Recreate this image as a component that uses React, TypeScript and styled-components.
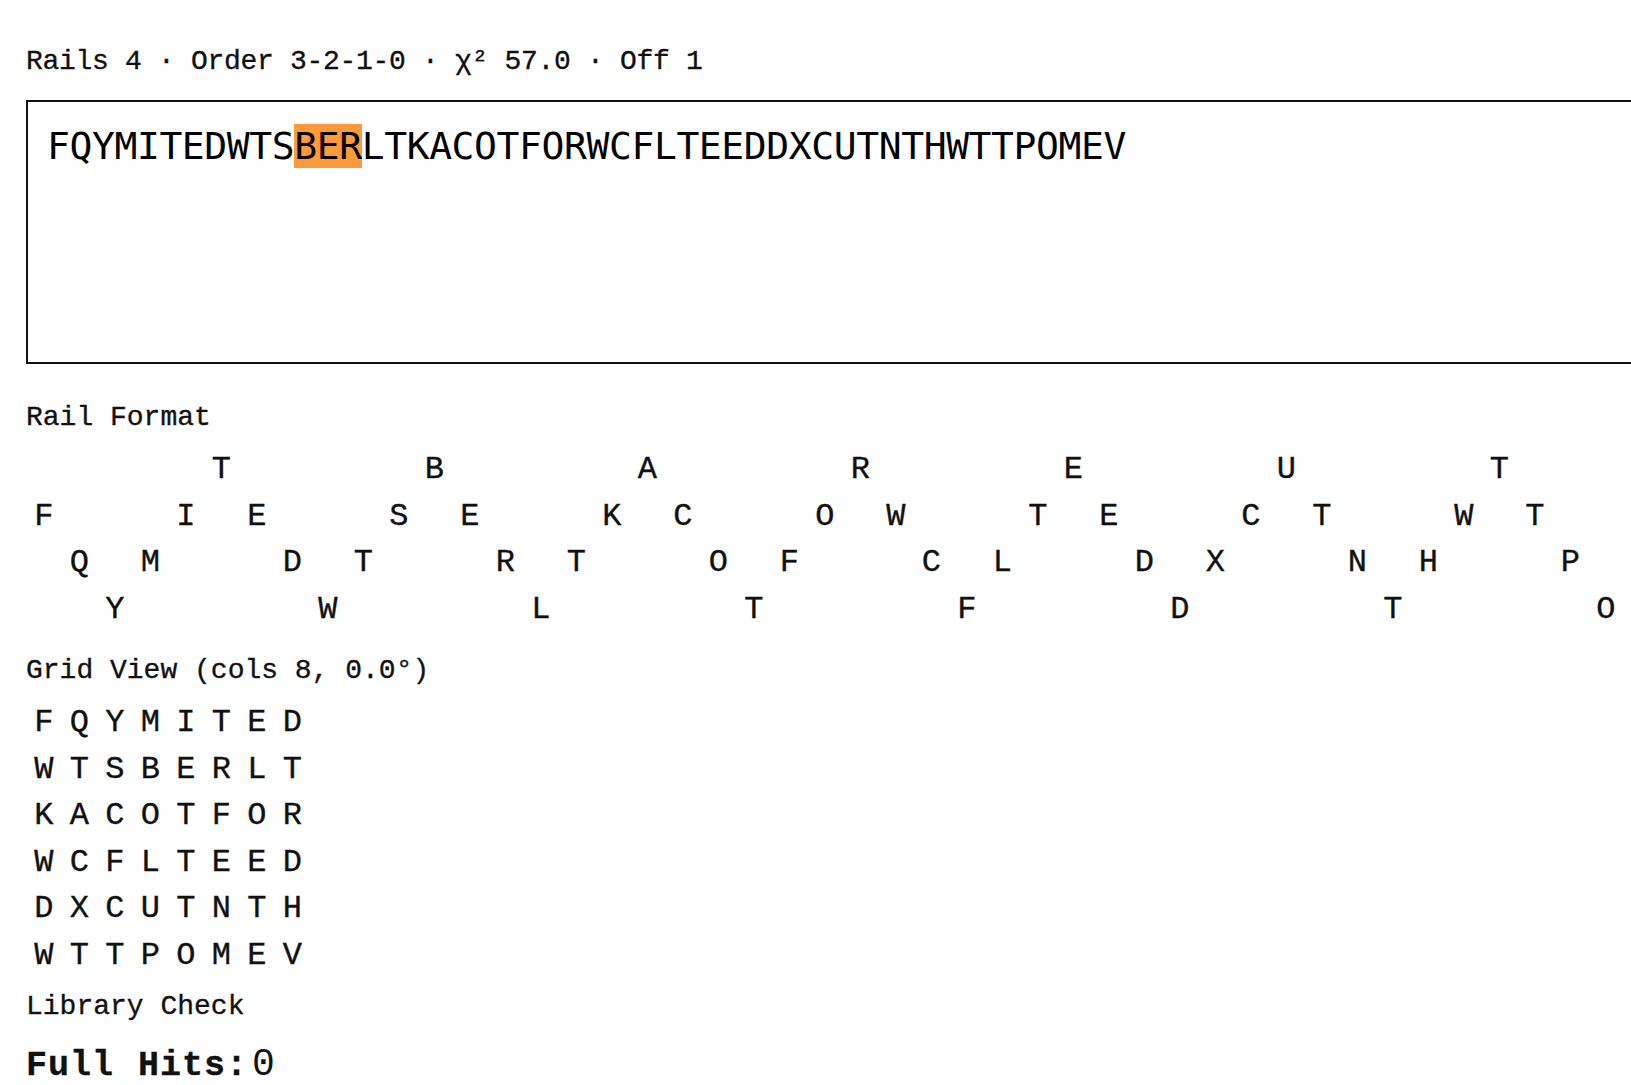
import React from "react";
import styled, { createGlobalStyle } from "styled-components";

const CIPHER = "FQYMITEDWTSBERLTKACOTFORWCFLTEEDDXCUTNTHWTTPOMEV";
const RAILS = 4;
const OFFSET = 1;
const COLS = 8;
const HL_START = 11;
const HL_LEN = 3;
const CELL = 35.5;

const railOf = (i: number) => {
  const period = 2 * (RAILS - 1);
  const p = (i + OFFSET) % period;
  return p < RAILS ? p : period - p;
};

const GlobalStyle = createGlobalStyle`
  html, body {
    margin: 0;
    padding: 0;
    background: #ffffff;
    overflow: hidden;
  }
  body {
    font-family: "Liberation Mono", "Courier New", monospace;
    color: #111111;
  }
`;

const Page = styled.main`
  width: max-content;
  padding: 46px 26px 40px 26px;
  display: flex;
  flex-direction: column;
`;

const typewriter = `
  font-family: "Liberation Mono", "Courier New", monospace;
  -webkit-text-stroke: 0.35px #111111;
  color: #111111;
`;

const StatusLine = styled.div`
  ${typewriter}
  font-size: 28px;
  line-height: 32px;
  letter-spacing: -0.3px;
  white-space: pre;
  margin-bottom: 22px;
`;

const CipherBox = styled.div`
  box-sizing: border-box;
  height: 264px;
  border: 2px solid #111111;
  padding: 22px 18px 22px 19px;
  font-family: "DejaVu Sans Mono", monospace;
  font-size: 38px;
  letter-spacing: -0.4px;
  color: #000000;
  white-space: pre;
`;

const Highlight = styled.mark`
  background: #ff9a3a;
  color: #000000;
`;

const SectionLabel = styled.h2<{ $gap: number }>`
  ${typewriter}
  margin: ${(p) => p.$gap}px 0 0 0;
  font-size: 28px;
  font-weight: 400;
  line-height: 32px;
  white-space: pre;
`;

const LetterBlock = styled.div<{ $gap: number; $cols: number }>`
  margin-top: ${(p) => p.$gap}px;
  display: grid;
  grid-template-columns: repeat(${(p) => p.$cols}, ${CELL}px);
  grid-auto-rows: 46.55px;
`;

const Cell = styled.span`
  ${typewriter}
  font-size: 32px;
  line-height: 46.55px;
  text-align: center;
`;

const HitsLine = styled.div`
  ${typewriter}
  margin-top: 18px;
  font-size: 35px;
  line-height: 48px;
  font-weight: 700;
  letter-spacing: 1px;
  word-spacing: 2px;
  white-space: pre;
`;

const HitsValue = styled.span`
  font-size: 38px;
  font-weight: 400;
  -webkit-text-stroke: 0;
  margin-left: 4px;
`;

export default function App() {
  const letters = CIPHER.split("");
  const railCells: React.ReactNode[] = [];
  for (let r = 0; r < RAILS; r++) {
    letters.forEach((ch, i) => {
      railCells.push(<Cell key={`r${r}-${i}`}>{railOf(i) === r ? ch : ""}</Cell>);
    });
  }

  return (
    <>
      <GlobalStyle />
      <Page>
        <StatusLine>Rails 4 · Order 3-2-1-0 · χ² 57.0 · Off 1</StatusLine>
        <CipherBox>
          {CIPHER.slice(0, HL_START)}
          <Highlight>{CIPHER.slice(HL_START, HL_START + HL_LEN)}</Highlight>
          {CIPHER.slice(HL_START + HL_LEN)}
        </CipherBox>

        <SectionLabel $gap={38}>Rail Format</SectionLabel>
        <LetterBlock $gap={13} $cols={CIPHER.length}>
          {railCells}
        </LetterBlock>

        <SectionLabel $gap={22}>Grid View (cols 8, 0.0°)</SectionLabel>
        <LetterBlock $gap={13} $cols={COLS}>
          {letters.map((ch, i) => (
            <Cell key={`g${i}`}>{ch}</Cell>
          ))}
        </LetterBlock>

        <SectionLabel $gap={12}>Library Check</SectionLabel>
        <HitsLine>
          Full Hits:<HitsValue>0</HitsValue>
        </HitsLine>
      </Page>
    </>
  );
}
